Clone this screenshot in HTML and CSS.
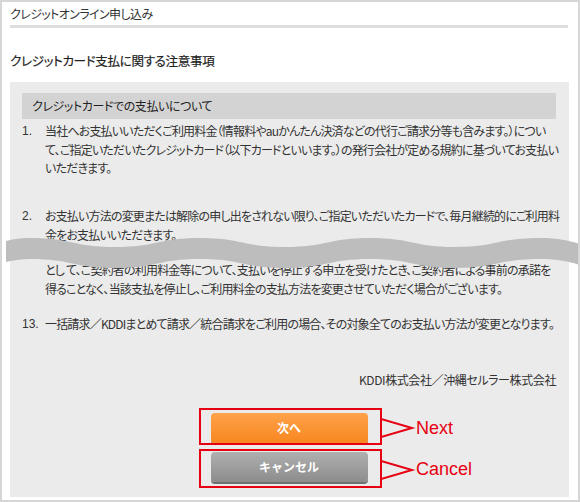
FILE: index.html
```html
<!DOCTYPE html>
<html lang="ja">
<head>
<meta charset="utf-8">
<link rel="stylesheet" href="styles.css">
</head>
<body>
<div class="frame">
  <div class="app-head">クレジットオンライン申し込み</div>
  <h1 class="title">クレジットカード支払に関する注意事項</h1>
  <div class="panel">
    <h2 class="sec-head">クレジットカードでの支払いについて</h2>
    <div class="item item-1">
      <span class="num">1.</span>
      <div class="body">
        <span class="ln">当社へお支払いいただくご利用料金（情報料やauかんたん決済などの代行ご請求分等も含みます。）につい</span>
        <span class="ln">て、ご指定いただいたクレジットカード（以下カードといいます。）の発行会社が定める規約に基づいてお支払い</span>
        <span class="ln">いただきます。</span>
      </div>
    </div>
    <div class="item item-2">
      <span class="num">2.</span>
      <div class="body">
        <span class="ln">お支払い方法の変更または解除の申し出をされない限り、ご指定いただいたカードで、毎月継続的にご利用料</span>
        <span class="ln">金をお支払いいただきます。</span>
      </div>
    </div>
    <div class="item item-frag">
      <span class="num"></span>
      <div class="body">
        <span class="ln">とし て、ご契約者の利用料金等について、支払いを停止する申立を受けたとき、ご契約者による事前の承諾を</span>
        <span class="ln">得ることなく、当該支払を停止し、ご利用料金の支払方法を変更させていただく場合がございます。</span>
      </div>
    </div>
    <div class="item item-13">
      <span class="num">13.</span>
      <div class="body">
        <span class="ln">一括請求／KDDIまとめて請求／統合請求をご利用の場合、その対象全てのお支払い方法が変更となります。</span>
      </div>
    </div>
    <p class="company">KDDI株式会社／沖縄セルラー株式会社</p>
    <div class="actions">
      <button class="btn btn-next">次へ</button>
      <button class="btn btn-cancel">キャンセル</button>
    </div>
  </div>

  <svg class="wave" width="580" height="38" viewBox="0 0 580 38">
    <path d="M6,6 C18,3 24,3 30,3 C72,3 73,12 115,12 C157,12 158,3 200,3 C242,3 243,12 285,12 C327,12 328,3 370,3 C412,3 413,12 455,12 C497,12 498,3 540,3 C560,3 570,6 580,9 L580,30 C570,27 560,24 540,24 C498,24 497,33 455,33 C413,33 412,24 370,24 C328,24 327,33 285,33 C243,33 242,24 200,24 C158,24 157,33 115,33 C73,33 72,24 30,24 C24,24 14,25 6,27 Z" fill="#bdbdbd"/>
  </svg>

  <div class="callout callout-next"></div>
  <div class="callout callout-cancel"></div>
  <svg class="tails" width="120" height="90" viewBox="0 0 120 90">
    <polyline points="0,11 31,20 0,29" fill="none" stroke="#e60012" stroke-width="2"/>
    <polyline points="0,53 31,62 0,71" fill="none" stroke="#e60012" stroke-width="2"/>
  </svg>
  <span class="label label-next">Next</span>
  <span class="label label-cancel">Cancel</span>
</div>
</body>
</html>
```
FILE: styles.css
```css
* { box-sizing: border-box; }
html, body { margin: 0; padding: 0; background: #fff; }
body {
  font-family: "Noto Sans CJK JP", "Noto Sans", sans-serif;
  font-size: 12px;
  color: #333;
  font-feature-settings: "palt";
}
.frame {
  position: relative;
  width: 580px;
  height: 502px;
  border: 2px solid #d6d6d6;
  padding: 0 9px 3px 8px;
  overflow: hidden;
}
.app-head {
  margin-top: -2px;
  margin-right: 1px;
  height: 28px;
  line-height: 20px;
  padding-top: 4px;
  font-size: 12px;
  letter-spacing: -0.6px;
  border-bottom: 3px solid #dedede;
}
.title {
  margin: 23px 0 11px;
  font-size: 12.5px;
  font-weight: normal;
  line-height: 20px;
  letter-spacing: -0.3px;
  color: #222;
  -webkit-text-stroke: 0.2px #222;
}
.panel {
  background: #ebebeb;
  padding: 11px 13px 13px 12px;
  height: 415px;
}
.sec-head {
  margin: 0 0 3px;
  background: #d3d3d3;
  height: 26px;
  line-height: 26px;
  padding-left: 10px;
  font-size: 12px;
  font-weight: normal;
  letter-spacing: -0.4px;
  color: #222;
}
.item {
  display: grid;
  grid-template-columns: 23px 1fr;
  line-height: 18.5px;
}
.item .num { font-family: "Liberation Sans", sans-serif; font-size: 12px; }
.ln { display: block; white-space: nowrap; letter-spacing: -0.82px; }
.item-2 { margin-top: 29.5px; }
.item-frag { margin-top: 17px; }
.item-13 { margin-top: 17px; }
.company {
  margin: 37.5px 0 0;
  text-align: right;
  line-height: 18.5px;
  letter-spacing: -0.4px;
}
.actions {
  margin-top: 23px;
  display: flex;
  flex-direction: column;
  align-items: center;
  gap: 9px;
}
.btn {
  width: 157px;
  height: 30px;
  border: none;
  border-radius: 4px;
  color: #fff;
  font-family: "Noto Sans CJK JP", sans-serif;
  font-size: 12px;
  font-weight: bold;
  padding: 0;
}
.btn-next {
  background: linear-gradient(#ffa24a, #f7871f);
  box-shadow: 0 2px 0 #c8671a;
}
.btn-cancel {
  background: linear-gradient(#b0b0b0, #8c8c8c);
  box-shadow: 0 2px 0 #6f6f6f;
}
.wave {
  position: absolute;
  left: -2px;
  top: 233px;
}
.callout {
  position: absolute;
  left: 197px;
  width: 183px;
  border: 2px solid #e60012;
}
.callout-next { top: 406px; height: 37px; }
.callout-cancel { top: 447px; height: 39px; }
.tails {
  position: absolute;
  left: 379px;
  top: 406px;
}
.label {
  position: absolute;
  left: 414px;
  font-family: "Liberation Sans", Arial, sans-serif;
  font-size: 18px;
  line-height: 20px;
  color: #e60012;
}
.label-next { top: 416px; }
.label-cancel { top: 457px; }
```
